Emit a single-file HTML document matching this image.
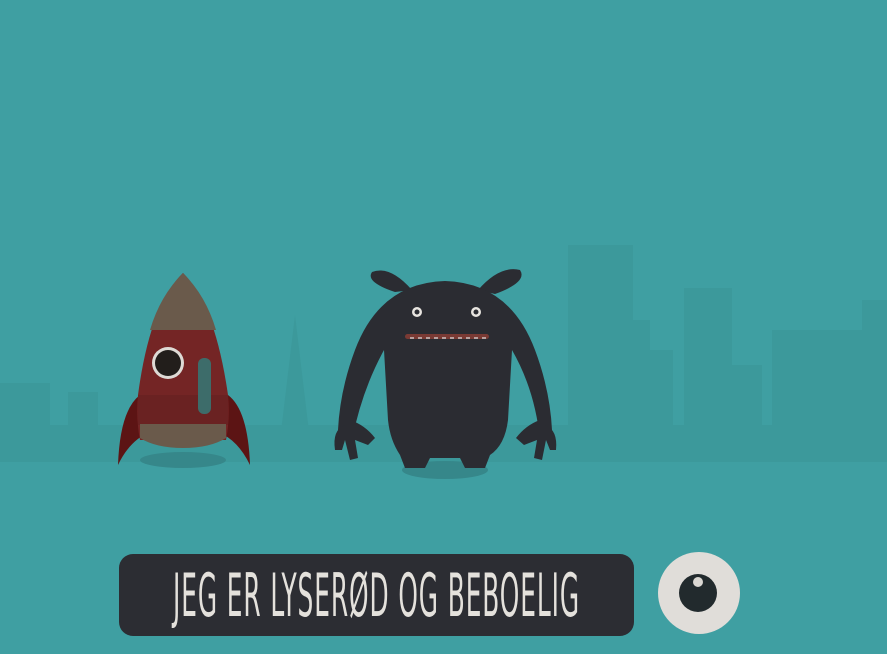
<!DOCTYPE html>
<html><head><meta charset="utf-8"><style>
html,body{margin:0;padding:0;width:887px;height:654px;overflow:hidden;background:#3f9fa2;}
.bar{position:absolute;left:119px;top:554px;width:515px;height:82px;background:#2c2d33;border-radius:14px;}
.txt{position:absolute;left:-300px;top:556px;width:1353px;height:80px;line-height:80px;text-align:center;white-space:nowrap;color:#e4e1dc;font-family:"Liberation Sans Narrow","DejaVu Sans Condensed","Liberation Sans",sans-serif;font-size:60px;letter-spacing:2px;transform:scaleX(0.46);transform-origin:676.5px 40px;}
</style></head><body>
<svg width="887" height="654" style="position:absolute;left:0;top:0">
<g fill="#3c999b">
<rect x="0" y="383" width="50" height="80"/>
<rect x="68" y="392" width="30" height="70"/>
<polygon points="280,440 295,315 310,440"/>
<rect x="568" y="245" width="65" height="220"/>
<rect x="630" y="320" width="20" height="140"/>
<rect x="648" y="350" width="25" height="110"/>
<rect x="684" y="288" width="48" height="170"/>
<rect x="732" y="365" width="30" height="100"/>
<rect x="772" y="330" width="90" height="130"/>
<rect x="862" y="300" width="25" height="160"/>
<rect x="0" y="425" width="887" height="40"/>
</g>
<rect x="0" y="462" width="887" height="192" fill="#3f9fa2"/>
<ellipse cx="183" cy="460" rx="43" ry="8" fill="#36878a"/>
<path d="M140,395 Q120,410 118,465 Q130,440 150,432Z" fill="#5c1414"/>
<path d="M228,395 Q248,410 250,465 Q238,440 218,432Z" fill="#5c1414"/>
<path d="M183,273 Q215,305 228,395 Q230,420 226,440 L140,440 Q136,420 138,395 Q150,305 183,273Z" fill="#742525"/>
<path d="M183,273 Q206,296 216,330 L150,330 Q160,296 183,273Z" fill="#6a5a4b"/>
<rect x="138" y="395" width="90" height="30" fill="#6a2222"/>
<path d="M140,424 L226,424 L226,438 Q210,448 183,448 Q156,448 140,438Z" fill="#6a5a4b"/>
<circle cx="168" cy="363" r="16" fill="#dedad5"/>
<circle cx="168" cy="363" r="13" fill="#221e1b"/>
<rect x="198" y="358" width="13" height="56" rx="6" fill="#3d6c6a"/>
<ellipse cx="445" cy="470" rx="43" ry="9" fill="#36878a"/>
<g fill="#2b2c32">
<path d="M412,290 Q390,265 372,272 Q365,282 395,292Z"/>
<path d="M478,290 Q500,265 520,270 Q528,282 495,294Z"/>
<path d="M445,281 Q510,283 535,350 Q550,390 552,430 L540,440 Q535,390 512,350 L508,420 Q505,445 490,455 L485,468 L465,468 L460,458 L430,458 L425,468 L405,468 L400,455 Q390,440 388,420 L384,350 Q362,390 352,440 L338,430 Q340,390 355,350 Q380,283 445,281Z"/>
<path d="M345,425 Q332,430 335,450 L342,450 L345,440 L350,460 L358,458 L355,440 L368,445 L375,438 Q365,425 350,420Z"/>
<path d="M545,425 Q558,430 556,450 L550,450 L546,440 L542,460 L534,458 L537,440 L524,445 L516,438 Q526,425 540,420Z"/>
</g>
<circle cx="417" cy="312" r="5" fill="#e8e5e0"/><circle cx="417" cy="312" r="2.5" fill="#2b2c32"/>
<circle cx="476" cy="312" r="5" fill="#e8e5e0"/><circle cx="476" cy="312" r="2.5" fill="#2b2c32"/>
<rect x="405" y="334" width="84" height="5" rx="2.5" fill="#7a3a34"/>
<path d="M410,338 H486" stroke="#ddd" stroke-width="1.2" stroke-dasharray="4,4"/>
<ellipse cx="699" cy="593" rx="41" ry="41" fill="#e0ddd9"/>
<circle cx="698" cy="593" r="19" fill="#222a2d"/>
<circle cx="698" cy="582" r="5" fill="#dad7d2"/>
</svg>
<div class="bar"></div>
<div class="txt">JEG ER LYSERØD OG BEBOELIG</div>
</body></html>
